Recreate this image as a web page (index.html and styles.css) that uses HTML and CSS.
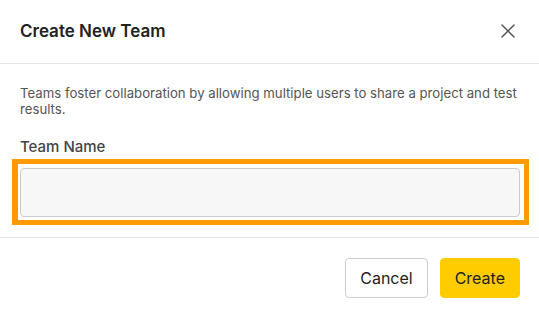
FILE: index.html
```html
<!DOCTYPE html>
<html lang="en">
<head>
<meta charset="utf-8">
<title>Create New Team</title>
<link rel="stylesheet" href="styles.css">
</head>
<body>
<div class="dialog">
  <header class="dialog-header">
    <h2 class="dialog-title">Create New Team</h2>
    <button class="close-btn" aria-label="Close">
      <svg width="14" height="14" viewBox="0 0 14 14" fill="none" stroke="#555" stroke-width="1.5" stroke-linecap="round">
        <path d="M1 1L13 13M13 1L1 13"/>
      </svg>
    </button>
  </header>
  <section class="dialog-body">
    <p class="description">Teams foster collaboration by allowing multiple users to share a project and test results.</p>
    <label class="field-label" for="team-name">Team Name</label>
    <div class="highlight">
      <input class="text-input" id="team-name" type="text">
    </div>
  </section>
  <footer class="dialog-footer">
    <button class="btn btn-secondary">Cancel</button>
    <button class="btn btn-primary">Create</button>
  </footer>
</div>
</body>
</html>
```

FILE: styles.css
```css
* { box-sizing: border-box; }
html, body {
  margin: 0;
  padding: 0;
  background: #fff;
}
body {
  font-family: Inter, "Noto Sans", sans-serif;
  color: #222;
}
.dialog {
  width: 539px;
  height: 317px;
  display: flex;
  flex-direction: column;
}
.dialog-header {
  display: flex;
  align-items: center;
  justify-content: space-between;
  padding: 19px 19px 20px 20px;
  border-bottom: 1px solid #e3e3e3;
}
.dialog-title {
  margin: 0;
  font-size: 17px;
  line-height: 22px;
  font-weight: 600;
  color: #222;
}
.close-btn {
  width: 24px;
  height: 24px;
  padding: 0;
  border: none;
  background: none;
  display: flex;
  align-items: center;
  justify-content: center;
}
.dialog-body {
  display: flex;
  flex-direction: column;
  padding: 21px 19px 12px 20px;
  border-bottom: 1px solid #e3e3e3;
}
.description {
  margin: 0;
  font-size: 13.2px;
  line-height: 16px;
  color: #555;
}
.field-label {
  margin-top: 21px;
  font-size: 15px;
  line-height: 18px;
  font-weight: 500;
  color: #444;
}
.highlight {
  margin: 3px -9px 0 -8px;
  border-style: solid;
  border-color: #ff9900;
  border-width: 5px 5px 5px 6px;
  padding: 4px 4px 3px 2px;
}
.text-input {
  display: block;
  height: 49px;
  width: 100%;
  border: 1px solid #cbcbcb;
  border-radius: 4px;
  background: #f7f7f7;
}
.dialog-footer {
  display: flex;
  justify-content: flex-end;
  gap: 12px;
  padding: 20px 19px 20px 20px;
}
.btn {
  height: 40px;
  padding: 0 14px;
  font-family: Inter, "Noto Sans", sans-serif;
  font-size: 16px;
  color: #222;
  border-radius: 4px;
}
.btn-secondary {
  background: #fff;
  border: 1px solid #cccccc;
}
.btn-primary {
  background: #ffcc00;
  border: 1px solid #ffcc00;
}
```
